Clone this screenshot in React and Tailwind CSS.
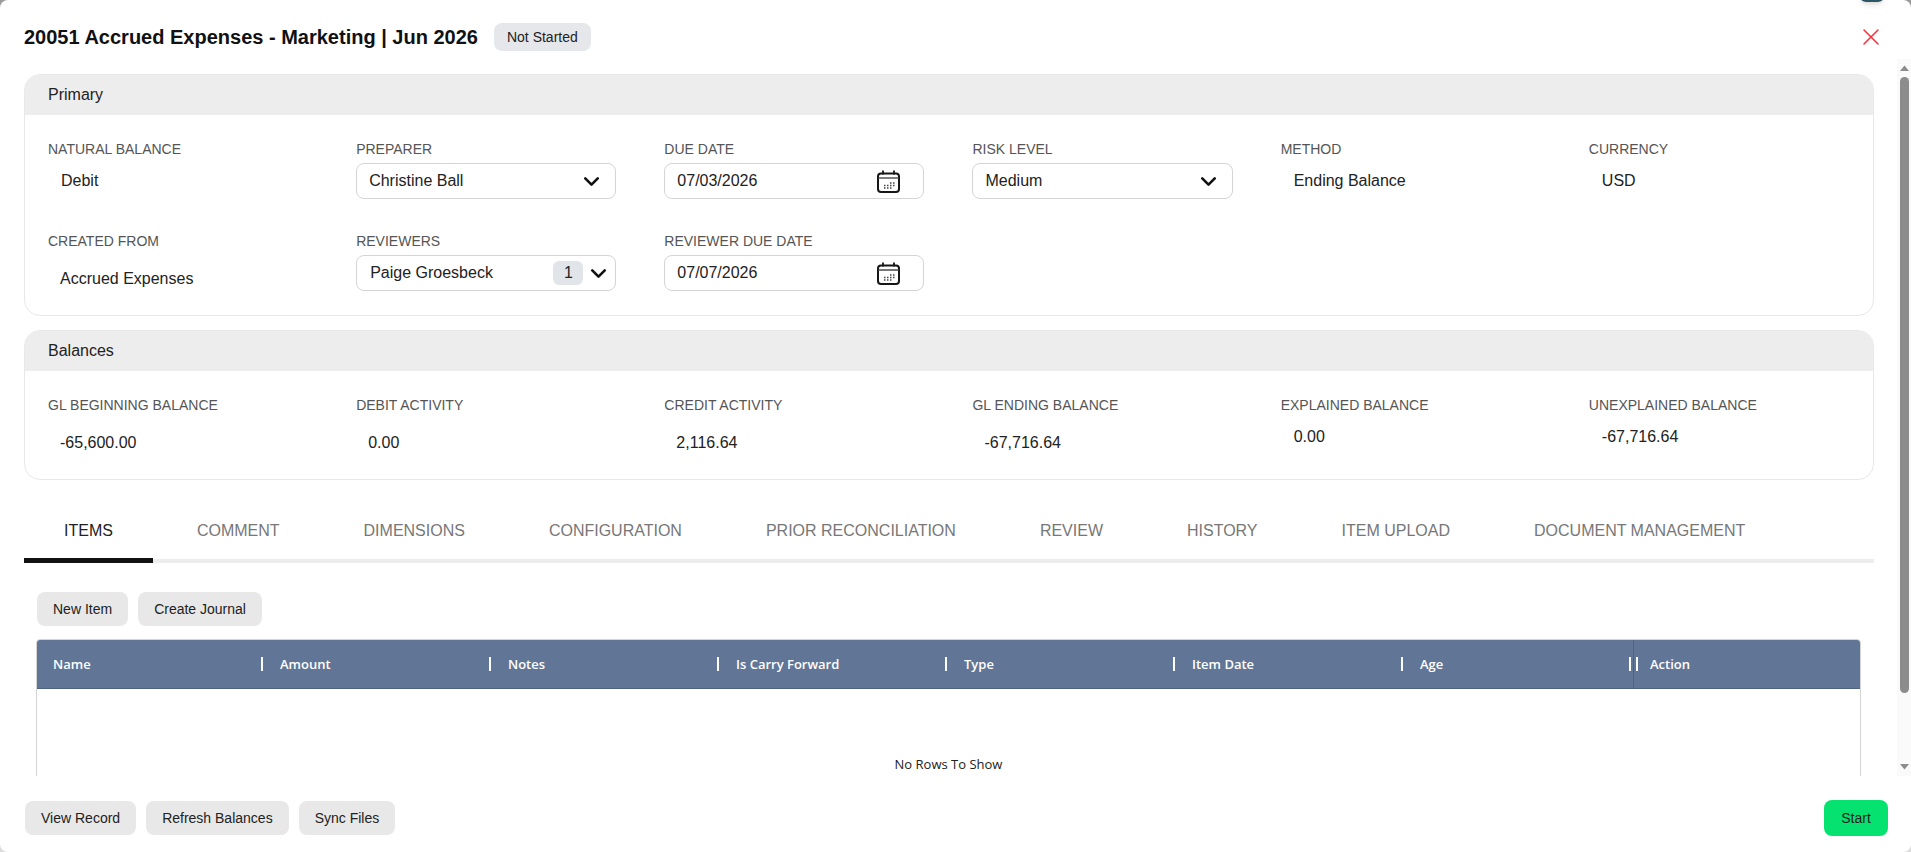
import { ChevronDown, X } from 'lucide-react';

const primaryRow1 = [
  { label: 'NATURAL BALANCE', text: 'Debit' },
  { label: 'PREPARER', select: 'Christine Ball' },
  { label: 'DUE DATE', date: '07/03/2026' },
  { label: 'RISK LEVEL', select: 'Medium' },
  { label: 'METHOD', text: 'Ending Balance' },
  { label: 'CURRENCY', text: 'USD' },
];

const balances = [
  { label: 'GL BEGINNING BALANCE', value: '-65,600.00' },
  { label: 'DEBIT ACTIVITY', value: '0.00' },
  { label: 'CREDIT ACTIVITY', value: '2,116.64' },
  { label: 'GL ENDING BALANCE', value: '-67,716.64' },
  { label: 'EXPLAINED BALANCE', value: '0.00', high: true },
  { label: 'UNEXPLAINED BALANCE', value: '-67,716.64', high: true },
];

const tabs = ['ITEMS', 'COMMENT', 'DIMENSIONS', 'CONFIGURATION', 'PRIOR RECONCILIATION', 'REVIEW', 'HISTORY', 'ITEM UPLOAD', 'DOCUMENT MANAGEMENT'];
const columns = ['Name', 'Amount', 'Notes', 'Is Carry Forward', 'Type', 'Item Date', 'Age'];

const Label = ({ children }) => (
  <div className="h-4 text-sm leading-4 text-[#555555] whitespace-nowrap">{children}</div>
);

const CalendarIcon = () => (
  <svg width="23" height="23" viewBox="0 0 23 23" fill="none" stroke="#161616">
    <rect x="1" y="3.5" width="21" height="18.5" rx="3" strokeWidth="2" />
    <path d="M1.5 8h20" strokeWidth="1.6" stroke="#555555" />
    <path d="M6 0.5v4M17 0.5v4" strokeWidth="1.8" />
    <path d="M7 15.5h1.5M10 15.5h1.5M13 15.5h1.5M7 18h1.5M10 18h1.5M13 18h1.5M13 13h1.5M16 13h1.5M16 15.5h1.5" strokeWidth="1.5" stroke="#444444" />
  </svg>
);

const SelectBox = ({ value }) => (
  <div className="mt-[6px] h-9 border border-[#d4d4d4] rounded-lg flex items-center pl-3 pr-[11px] text-base text-[#222222]">
    <span className="flex-1">{value}</span>
    <ChevronDown size={25} strokeWidth={2.5} className="text-[#111111]" />
  </div>
);

const DateBox = ({ value }) => (
  <div className="mt-[6px] h-9 border border-[#d4d4d4] rounded-lg flex items-center pl-3 pr-[23px] text-base text-[#222222]">
    <span className="flex-1">{value}</span>
    <CalendarIcon />
  </div>
);

const Field = ({ field }) => (
  <div>
    <Label>{field.label}</Label>
    {field.select && <SelectBox value={field.select} />}
    {field.date && <DateBox value={field.date} />}
    {field.text && <div className="mt-[6px] h-9 flex items-center pl-[13px] text-base text-[#222222]">{field.text}</div>}
  </div>
);

const Card = ({ title, children }) => (
  <div className="border border-[#e8e8e8] rounded-2xl overflow-hidden">
    <div className="h-10 bg-[#ededed] flex items-center pl-[23px] text-base text-[#222222]">{title}</div>
    {children}
  </div>
);

const GrayButton = ({ children }) => (
  <button className="h-[34px] px-4 rounded-lg bg-[#e8e8e8] text-sm text-[#222222]">{children}</button>
);

const Scrollbar = () => (
  <div className="w-[14px] mt-[-15px] bg-[#fafafa] flex flex-col items-center">
    <svg width="9" height="6" viewBox="0 0 9 6" className="mt-[6px] shrink-0">
      <path d="M4.5 0.5L9 6H0z" fill="#8c8c8c" />
    </svg>
    <div className="mt-[6px] w-[9px] h-[616px] rounded-full bg-[#8c8c8c]" />
    <div className="flex-1" />
    <svg width="9" height="6" viewBox="0 0 9 6" className="mb-[6px] shrink-0">
      <path d="M4.5 5.5L9 0H0z" fill="#8c8c8c" />
    </svg>
  </div>
);

const App = () => {
  return (
    <div className="h-[852px] w-[1911px] bg-linear-to-b from-[#9a9a9a] to-[#dddddd] overflow-hidden" style={{ fontFamily: '"Liberation Sans", Arial, sans-serif' }}>
      <div className="relative h-full bg-white rounded-lg flex flex-col">
        <div className="absolute top-[-10px] right-[27px] w-6 h-3 rounded-full bg-[#2e5566] shadow-md" />

        <div className="h-[74px] shrink-0 flex items-center pl-6 pr-[26px]">
          <h1 className="text-xl font-bold text-[#111111]">20051 Accrued Expenses - Marketing | Jun 2026</h1>
          <span className="ml-4 h-7 px-[13px] rounded-lg bg-[#e5e7eb] flex items-center text-sm text-[#222222]">Not Started</span>
          <div className="flex-1" />
          <X size={28} strokeWidth={1.3} className="text-[#f5333f]" />
        </div>

        <div className="flex-1 min-h-0 flex">
          <div className="flex-1 min-w-0 overflow-hidden pl-6 pr-[23px]">
            <Card title="Primary">
              <div className="grid grid-cols-6 gap-x-12 gap-y-[34px] pt-[26px] pb-6 pl-[23px] pr-[24px]">
                {primaryRow1.map((f) => <Field key={f.label} field={f} />)}
                <div>
                  <Label>CREATED FROM</Label>
                  <div className="mt-[6px] h-9 flex items-center pl-3 pt-3 text-base text-[#222222]">Accrued Expenses</div>
                </div>
                <div>
                  <Label>REVIEWERS</Label>
                  <div className="mt-[6px] h-9 border border-[#d4d4d4] rounded-lg flex items-center pl-[13px] pr-1 text-base text-[#222222]">
                    <span className="flex-1">Paige Groesbeck</span>
                    <span className="w-[30px] h-6 rounded-md bg-[#e1e5ea] flex items-center justify-center">1</span>
                    <ChevronDown size={25} strokeWidth={2.5} className="ml-[3px] text-[#111111]" />
                  </div>
                </div>
                <Field field={{ label: 'REVIEWER DUE DATE', date: '07/07/2026' }} />
              </div>
            </Card>

            <div className="mt-[14px]">
              <Card title="Balances">
                <div className="grid grid-cols-6 gap-x-12 pt-[26px] pb-5 pl-[23px] pr-[24px]">
                  {balances.map((b) => (
                    <div key={b.label}>
                      <Label>{b.label}</Label>
                      <div className={`h-[18px] leading-[18px] text-base text-[#222222] ${b.high ? 'pl-[13px] mt-[15px] mb-[13px]' : 'pl-3 mt-[21px] mb-[7px]'}`}>{b.value}</div>
                    </div>
                  ))}
                </div>
              </Card>
            </div>

            <div className="mt-[17px] h-[66px] flex items-start gap-1 border-b-4 border-[#ededed]">
              {tabs.map((t, i) => (
                <div key={t} className={`h-[66px] px-10 pt-[7px] flex items-center text-base whitespace-nowrap border-b-[5px] ${i === 0 ? 'text-[#222222] border-[#111111]' : 'text-[#777777] border-transparent'}`}>
                  {t}
                </div>
              ))}
            </div>

            <div className="pl-[13px] pr-[14px]">
              <div className="mt-[29px] flex gap-[10px]">
                <GrayButton>New Item</GrayButton>
                <GrayButton>Create Journal</GrayButton>
              </div>

              <div className="mt-[13px] -mx-px h-[300px] border border-[#d4d4d4] rounded-[4px] overflow-hidden">
                <div className="h-[49px] bg-[#617596] border-b border-[#4f6485] flex items-center text-[13px] font-semibold text-white" style={{ fontFamily: '"Open Sans", sans-serif' }}>
                  {columns.map((c) => (
                    <div key={c} className="relative w-[228px] h-full shrink-0 flex items-center pl-[15px] pt-[2px] first:pl-4">
                      {c}
                      <span className="absolute right-[2px] top-[17px] h-[14px] w-[2px] bg-white" />
                    </div>
                  ))}
                  <div className="relative flex-1 h-full flex items-center pl-4 pt-[2px] border-l border-[#4f6485]">
                    Action
                    <span className="absolute left-[2px] top-[17px] h-[14px] w-[2px] bg-white" />
                  </div>
                </div>
                <div className="pt-[66px] text-center text-[13px] text-[#222222]" style={{ fontFamily: '"Open Sans", sans-serif' }}>No Rows To Show</div>
              </div>
            </div>
          </div>
          <Scrollbar />
        </div>

        <div className="h-[76px] shrink-0 flex items-center pt-2 pl-[25px] pr-[23px] gap-[10px]">
          <GrayButton>View Record</GrayButton>
          <GrayButton>Refresh Balances</GrayButton>
          <GrayButton>Sync Files</GrayButton>
          <div className="flex-1" />
          <button className="h-9 w-16 rounded-lg bg-[#05e270] text-sm text-[#222222]">Start</button>
        </div>
      </div>
    </div>
  );
};

export default App;
